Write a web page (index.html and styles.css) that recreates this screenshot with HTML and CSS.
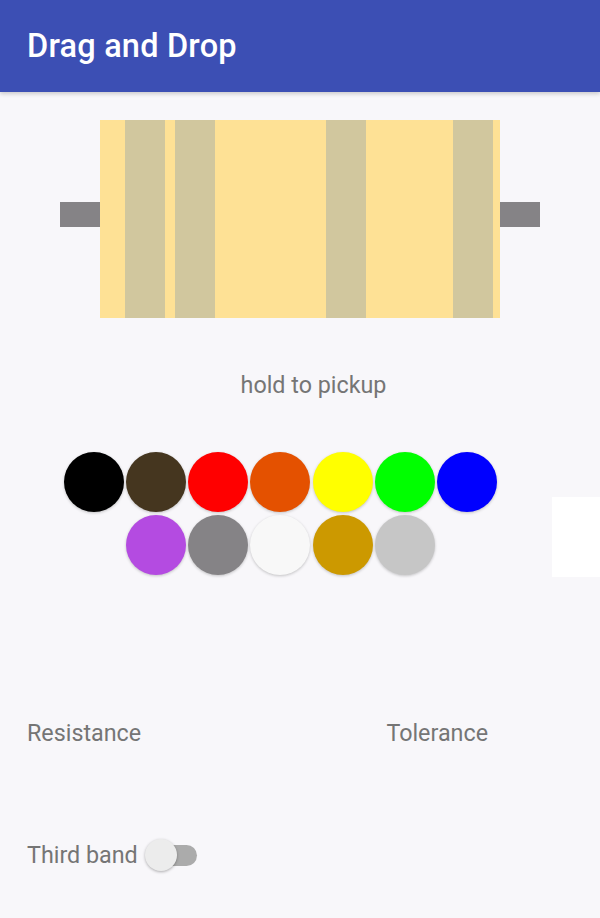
FILE: index.html
```html
<!DOCTYPE html>
<html>
<head>
<meta charset="utf-8">
<link rel="stylesheet" href="styles.css">
</head>
<body>
<header class="appbar"><h1 class="title">Drag and Drop</h1></header>
<main class="content">
  <section class="resistor">
    <div class="lead"></div>
    <div class="body">
      <div class="band b1"></div>
      <div class="band b2"></div>
      <div class="band b3"></div>
      <div class="band b4"></div>
    </div>
    <div class="lead"></div>
  </section>
  <p class="hint">hold to pickup</p>
  <section class="palette">
    <div class="chip" style="background:#000000"></div>
    <div class="chip" style="background:#45361f"></div>
    <div class="chip" style="background:#ff0000"></div>
    <div class="chip" style="background:#e45100"></div>
    <div class="chip" style="background:#ffff00"></div>
    <div class="chip" style="background:#00ff00"></div>
    <div class="chip" style="background:#0000ff"></div>
    <div class="chip skip" style="background:#b44be1"></div>
    <div class="chip" style="background:#858386"></div>
    <div class="chip" style="background:#f8f8f8"></div>
    <div class="chip" style="background:#cc9900"></div>
    <div class="chip" style="background:#c6c6c6"></div>
    <div class="glitch"></div>
  </section>
  <section class="values">
    <span class="label">Resistance</span>
    <span class="label tol">Tolerance</span>
  </section>
  <section class="third">
    <span class="label">Third band</span>
    <div class="switch"><div class="track"></div><div class="thumb"></div></div>
  </section>
</main>
</body>
</html>
```
FILE: styles.css
```css
* { box-sizing: border-box; }
html, body { margin: 0; padding: 0; }
body {
  width: 600px;
  height: 918px;
  overflow: hidden;
  background: #f8f7fa;
  font-family: Roboto, "Noto Sans", sans-serif;
}
.appbar {
  height: 92px;
  background: #3c4fb4;
  display: flex;
  align-items: center;
  padding-left: 27px;
  box-shadow: 0 2px 4px rgba(0,0,0,0.18);
  position: relative;
}
.title {
  margin: 0;
  color: #ffffff;
  font-size: 32.5px;
  font-weight: 500;
  letter-spacing: 0.2px;
}
.content { display: flex; flex-direction: column; }
.resistor {
  margin-top: 28px;
  display: flex;
  justify-content: center;
  align-items: flex-start;
}
.lead {
  width: 40px;
  height: 25px;
  background: #858386;
  margin-top: 82px;
}
.body {
  width: 400px;
  height: 198px;
  background: #fee195;
  display: flex;
}
.band {
  width: 40px;
  height: 100%;
  background: #d1c79e;
}
.b1 { margin-left: 25px; }
.b2 { margin-left: 10px; }
.b3 { margin-left: 111px; }
.b4 { margin-left: 87px; }
.hint {
  margin: 54px 0 0;
  text-align: center;
  font-size: 23.3px;
  line-height: 26px;
  color: #757575;
  padding-left: 27px;
}
.palette {
  position: relative;
  margin-top: 54px;
  align-self: flex-start;
  margin-left: 64px;
  display: grid;
  grid-template-columns: repeat(7, 60px);
  column-gap: 2.17px;
  row-gap: 3px;
}
.chip {
  width: 60px;
  height: 60px;
  border-radius: 50%;
  box-shadow: 0 1px 3px rgba(0,0,0,0.22);
}
.skip { grid-column-start: 2; }
.glitch {
  position: absolute;
  left: 488px;
  top: 45px;
  width: 48px;
  height: 80px;
  background: #ffffff;
}
.values {
  margin-top: 145px;
  display: flex;
  padding-left: 27px;
}
.label {
  font-size: 23.3px;
  line-height: 26px;
  color: #757575;
}
.tol { margin-left: auto; margin-right: 112px; }
.third {
  margin-top: 93px;
  display: flex;
  align-items: center;
  padding-left: 27px;
}
.switch {
  position: relative;
  width: 54px;
  height: 32px;
  margin-left: 7px;
}
.track {
  position: absolute;
  left: 6px;
  top: 6px;
  width: 46px;
  height: 21px;
  border-radius: 11px;
  background: #ababab;
}
.thumb {
  position: absolute;
  left: 0;
  top: 0;
  width: 32px;
  height: 32px;
  border-radius: 50%;
  background: #ececec;
  box-shadow: 0 1px 3px rgba(0,0,0,0.3);
}
```
